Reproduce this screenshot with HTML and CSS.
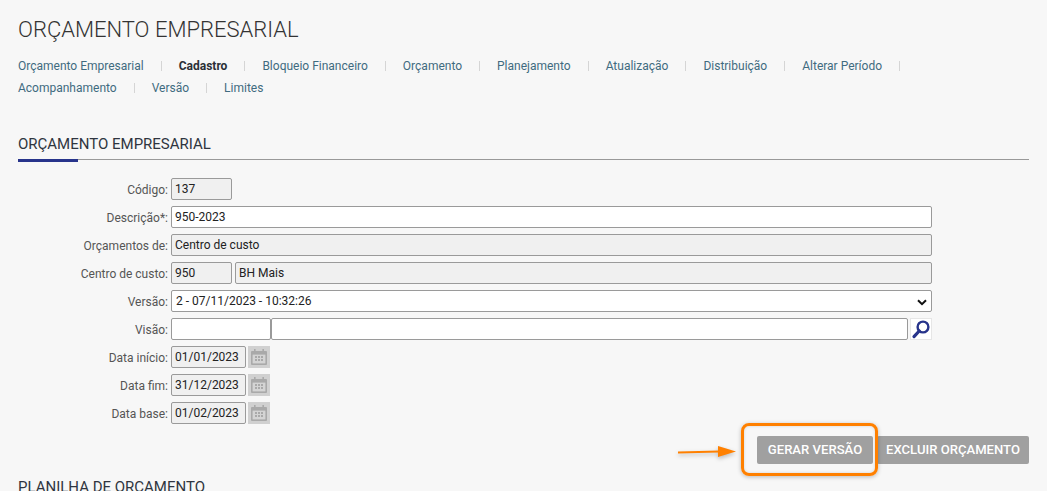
FILE: index.html
```html
<!DOCTYPE html>
<html lang="pt-BR">
<head>
<meta charset="utf-8">
<title>Orçamento Empresarial</title>
<link rel="stylesheet" href="styles.css">
</head>
<body>
<main class="page">
  <h1 class="title">ORÇAMENTO EMPRESARIAL</h1>
  <nav class="tabs">
    <a class="tab">Orçamento Empresarial</a>
    <a class="tab active">Cadastro</a>
    <a class="tab">Bloqueio Financeiro</a>
    <a class="tab">Orçamento</a>
    <a class="tab">Planejamento</a>
    <a class="tab">Atualização</a>
    <a class="tab">Distribuição</a>
    <a class="tab">Alterar Período</a>
    <a class="tab">Acompanhamento</a>
    <a class="tab">Versão</a>
    <a class="tab last">Limites</a>
  </nav>
  <h2 class="section"><span>ORÇAMENTO EMPRESARIAL</span></h2>
  <form class="form">
    <div class="row"><label class="lbl">Código:</label><div class="field ro w60">137</div></div>
    <div class="row"><label class="lbl">Descrição*:</label><div class="field grow">950-2023</div></div>
    <div class="row"><label class="lbl">Orçamentos de:</label><div class="field ro grow">Centro de custo</div></div>
    <div class="row"><label class="lbl">Centro de custo:</label><div class="field ro w60">950</div><div class="field ro grow">BH Mais</div></div>
    <div class="row"><label class="lbl">Versão:</label>
      <div class="field grow select">2 - 07/11/2023 - 10:32:26
        <svg class="chev" viewBox="0 0 10 7" width="10" height="7"><path d="M1 1.2 5 5.2 9 1.2" fill="none" stroke="#111" stroke-width="2"/></svg>
      </div>
    </div>
    <div class="row tight"><label class="lbl">Visão:</label><div class="field w100"></div><div class="field grow"></div>
      <div class="search">
        <svg viewBox="0 0 20 20" width="20" height="20"><circle cx="12" cy="8" r="5.4" fill="none" stroke="#27348b" stroke-width="2.4"/><path d="M8.2 12 3 17.6" fill="none" stroke="#27348b" stroke-width="3.2" stroke-linecap="round"/></svg>
      </div>
    </div>
    <div class="row"><label class="lbl">Data início:</label><div class="field ro w75">01/01/2023</div>
      <div class="cal"><svg viewBox="0 0 18 18" width="18" height="18"><use href="#cal"/></svg></div></div>
    <div class="row"><label class="lbl">Data fim:</label><div class="field ro w75">31/12/2023</div>
      <div class="cal"><svg viewBox="0 0 18 18" width="18" height="18"><use href="#cal"/></svg></div></div>
    <div class="row"><label class="lbl">Data base:</label><div class="field ro w75">01/02/2023</div>
      <div class="cal"><svg viewBox="0 0 18 18" width="18" height="18"><use href="#cal"/></svg></div></div>
  </form>
  <div class="actions">
    <button type="button" class="btn first">GERAR VERSÃO</button>
    <button type="button" class="btn second">EXCLUIR ORÇAMENTO</button>
  </div>
  <h2 class="section-plain">PLANILHA DE ORÇAMENTO</h2>
</main>

<div class="callout"></div>
<svg class="arrow" viewBox="0 0 60 16" width="60" height="16"><path d="M1 8.4 42 7.6" stroke="#ff8000" stroke-width="2" fill="none"/><path d="M41 2 59 7.4 41 13Z" fill="#ff8000"/></svg>

<svg class="defs" width="0" height="0">
  <symbol id="cal" viewBox="0 0 18 18">
    <path d="M2 3h14a1 1 0 0 1 1 1v12a1 1 0 0 1-1 1H2a1 1 0 0 1-1-1V4a1 1 0 0 1 1-1Z" fill="#a9a9a9"/>
    <rect x="4" y="1" width="1.6" height="3" fill="#a9a9a9"/><rect x="12.4" y="1" width="1.6" height="3" fill="#a9a9a9"/>
    <rect x="2.6" y="6.6" width="12.8" height="8.8" fill="#d4d4d4"/>
    <path d="M5 8h2v2H5zM8 8h2v2H8zM11 8h2v2h-2zM5 11h2v2H5zM8 11h2v2H8zM11 11h2v2h-2z" fill="#a9a9a9"/>
  </symbol>
</svg>
</body>
</html>
```

FILE: styles.css
```css
* { box-sizing: border-box; }
html, body { margin: 0; height: 100%; }
body {
  background: #f7f7f7;
  font-family: Roboto, "Liberation Sans", sans-serif;
  color: #333;
  overflow: hidden;
  position: relative;
}
.page { padding: 17px 18px 0; }
.title {
  margin: 0;
  font-size: 22px;
  line-height: 26px;
  font-weight: 300;
  color: #333;
}
.tabs {
  margin-top: 12px;
  display: flex;
  flex-wrap: wrap;
  width: 950px;
  font-size: 12px;
  line-height: 22px;
  color: #3f6b80;
}
.tab { position: relative; margin-right: 35px; white-space: nowrap; }
.tab::after {
  content: "";
  position: absolute;
  right: -18px;
  top: 6px;
  height: 10px;
  width: 1px;
  background: #d5d5d5;
}
.tab.last::after { display: none; }
.tab.active { color: #2b2f36; font-weight: 700; }
.section {
  margin: 35px 0 0;
  font-size: 15px;
  line-height: 20px;
  font-weight: 400;
  color: #2f3540;
  border-bottom: 1px solid #999;
  height: 26px;
  position: relative;
}
.section span { display: block; }
.section::after {
  content: "";
  position: absolute;
  left: 0;
  bottom: -3px;
  width: 60px;
  height: 3px;
  background: #27348b;
}
.form { margin-top: 18px; width: 914px; display: flex; flex-direction: column; gap: 6px; }
.row { display: flex; align-items: center; height: 22px; gap: 3px; }
.row.tight { gap: 0; }
.lbl {
  width: 150px;
  flex: none;
  text-align: right;
  font-size: 12px;
  line-height: 16px;
  padding-top: 2px;
  color: #555;
}
.tight .lbl { margin-right: 3px; }
.field {
  height: 22px;
  border: 1px solid #9a9a9a;
  border-radius: 2px;
  background: #fff;
  font-size: 12px;
  line-height: 20px;
  padding: 0 3px;
  color: #222;
  white-space: nowrap;
}
.ro { background: #f0f0f0; }
.grow { flex: 1; }
.w60 { width: 61px; flex: none; }
.w75 { width: 75px; flex: none; }
.w100 { width: 100px; flex: none; }
.select { position: relative; padding-left: 4px; }
.chev { position: absolute; right: 4px; top: 8px; }
.search {
  width: 22px;
  height: 22px;
  margin-left: 2px;
  flex: none;
  background: #fff;
  border: 1px solid #e6e6e6;
  display: flex;
  align-items: center;
  justify-content: center;
}
.cal {
  width: 22px;
  height: 22px;
  margin-left: -1px;
  flex: none;
  background: #d0d0d0;
  display: flex;
  align-items: center;
  justify-content: center;
}
.actions {
  margin-top: 12px;
  display: flex;
  justify-content: flex-end;
  gap: 4px;
}
.btn {
  height: 28px;
  padding: 0 0 2px;
  border: 0;
  border-radius: 2px;
  background: #a0a0a0;
  color: #fff;
  font-family: Roboto, "Liberation Sans", sans-serif;
  font-size: 13.1px;
  font-weight: 500;
}
.btn.first { width: 116px; }
.btn.second { width: 152px; }
.section-plain {
  margin: 13px 0 0;
  font-size: 15px;
  line-height: 20px;
  font-weight: 400;
  color: #2f3540;
}
.callout {
  position: absolute;
  left: 741px;
  top: 423px;
  width: 137px;
  height: 53px;
  border: 3px solid #ff8000;
  border-radius: 8px;
  box-shadow: 0 1px 4px rgba(0,0,0,.25), inset 0 0 3px rgba(0,0,0,.15);
}
.arrow { position: absolute; left: 677px; top: 444px; filter: drop-shadow(0 2px 2px rgba(0,0,0,.25)); }
.defs { position: absolute; }
```
